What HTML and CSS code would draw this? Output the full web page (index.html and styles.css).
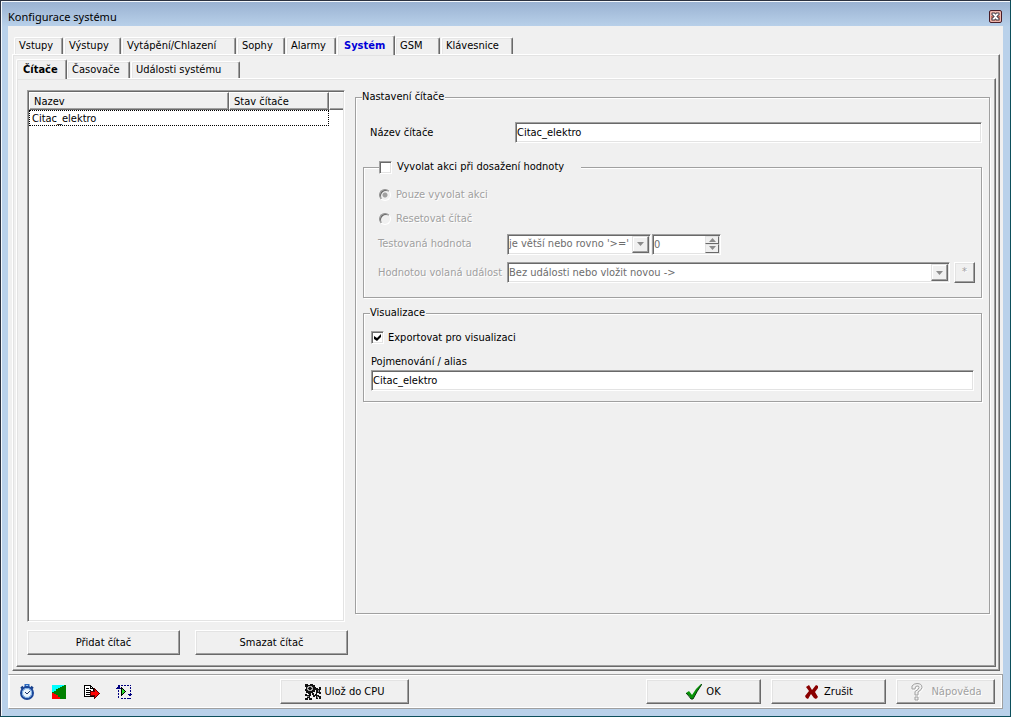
FILE: index.html
```html
<!DOCTYPE html>
<html lang="cs">
<head>
<meta charset="utf-8">
<title>Konfigurace systému</title>
<link rel="stylesheet" href="styles.css">
</head>
<body>
<main class="window">
  <header class="titlebar">
    <h1 class="title">Konfigurace systému</h1>
    <button class="close" type="button" aria-label="Zavřít">
      <svg viewBox="0 0 9 9" width="9" height="9"><path d="M1 1h3v1h1V1h3v2H7v1H6v1h1v1h1v2H5V7H4v1H1V6h1V5h1V4H2V3H1z" fill="#fff" stroke="#4c4650" stroke-width="1"/></svg>
    </button>
  </header>

  <div class="client">
    <div class="tabs tabs-main" role="tablist">
      <button class="tab" role="tab" type="button">Vstupy</button>
      <button class="tab" role="tab" type="button">Výstupy</button>
      <button class="tab" role="tab" type="button">Vytápění/Chlazení</button>
      <button class="tab" role="tab" type="button">Sophy</button>
      <button class="tab" role="tab" type="button">Alarmy</button>
      <button class="tab tab-selected tab-blue" role="tab" type="button" aria-selected="true">Systém</button>
      <button class="tab" role="tab" type="button">GSM</button>
      <button class="tab" role="tab" type="button">Klávesnice</button>
    </div>
    <div class="page page-main">
      <div class="tabs tabs-sub" role="tablist">
        <button class="tab tab-selected" role="tab" type="button" aria-selected="true">Čítače</button>
        <button class="tab" role="tab" type="button">Časovače</button>
        <button class="tab" role="tab" type="button">Události systému</button>
      </div>
      <div class="page page-sub">
        <section class="counters">
          <div class="list">
            <table class="table">
              <thead><tr><th class="col-name">Nazev</th><th class="col-state">Stav čítače</th><th class="col-rest"></th></tr></thead>
              <tbody><tr><td class="focused" colspan="2">Citac_elektro</td><td></td></tr></tbody>
            </table>
          </div>
          <div class="list-actions">
            <button class="btn" type="button">Přidat čítač</button>
            <button class="btn" type="button">Smazat čítač</button>
          </div>
        </section>

        <fieldset class="group settings">
          <legend class="legend">Nastavení čítače</legend>
          <div class="name-row">
            <label for="name">Název čítače</label>
            <input class="field" id="name" type="text" value="Citac_elektro">
          </div>

          <fieldset class="group action">
            <legend class="legend legend-check">
              <label class="choice"><input class="check" type="checkbox">Vyvolat akci při dosažení hodnoty</label>
            </legend>
            <div class="action-body">
              <label class="choice muted"><input class="radio" type="radio" name="mode" checked disabled>Pouze vyvolat akci</label>
              <label class="choice muted"><input class="radio" type="radio" name="mode" disabled>Resetovat čítač</label>
              <div class="action-row">
                <label class="muted" for="cond">Testovaná hodnota</label>
                <span class="combo combo-short">
                  <select class="field" id="cond" disabled><option>je větší nebo rovno '&gt;='</option></select>
                  <span class="drop"><svg viewBox="0 0 7 4" width="7" height="4"><path d="M0 0h7L3.500 4z" fill="#8c8c8c"/></svg></span>
                </span>
                <span class="combo spin">
                  <input class="field" type="number" value="0" aria-label="Hodnota" disabled>
                  <span class="spin-buttons">
                    <button class="spin-btn" type="button" aria-label="Zvýšit" disabled><svg viewBox="0 0 7 4" width="7" height="4"><path d="M0 4h7L3.500 0z" fill="#8c8c8c"/></svg></button>
                    <button class="spin-btn" type="button" aria-label="Snížit" disabled><svg viewBox="0 0 7 4" width="7" height="4"><path d="M0 0h7L3.500 4z" fill="#8c8c8c"/></svg></button>
                  </span>
                </span>
              </div>
              <div class="action-row">
                <label class="muted" for="event">Hodnotou volaná událost</label>
                <span class="combo combo-long">
                  <select class="field" id="event" disabled><option>Bez události nebo vložit novou -&gt;</option></select>
                  <span class="drop"><svg viewBox="0 0 7 4" width="7" height="4"><path d="M0 0h7L3.500 4z" fill="#8c8c8c"/></svg></span>
                </span>
                <button class="btn btn-star" type="button" disabled>*</button>
              </div>
            </div>
          </fieldset>

          <fieldset class="group visual">
            <legend class="legend">Visualizace</legend>
            <div class="visual-body">
              <label class="choice choice-near"><input class="check" type="checkbox" checked>Exportovat pro visualizaci</label>
              <label for="alias">Pojmenování / alias</label>
              <input class="field" id="alias" type="text" value="Citac_elektro">
            </div>
          </fieldset>
        </fieldset>
      </div>
    </div>

    <footer class="footer">
      <div class="tools">
        <button class="tool" type="button" aria-label="Stopky">
          <svg viewBox="0 0 16 16" width="16" height="16"><path d="M4.500 0h5v3h-5z" fill="#2d68bd"/><path d="M6 1h2v1H6z" fill="#9cc8f0"/><path d="M1 4.500L3 2.500M13 4.500L11 2.500" stroke="#173f87" stroke-width="2"/><circle cx="7" cy="9" r="6" fill="#eef6fd" stroke="#1b479a" stroke-width="2"/><circle cx="7" cy="9" r="4.500" fill="none" stroke="#79aee4"/><path d="M5 8l2 2 3-3" fill="none" stroke="#1d3668"/></svg>
        </button>
        <button class="tool" type="button" aria-label="Mapa">
          <svg viewBox="0 0 16 16" width="16" height="16" shape-rendering="crispEdges"><path d="M0 1h14v14H0z" fill="#008000"/><path d="M0 1h12v1h-2v1H8v1H6v1H4v2H2v1H0z" fill="#0ff"/><path d="M0 9h2v1h2v1h2v2h2v2H0z" fill="#f00"/></svg>
        </button>
        <button class="tool" type="button" aria-label="Export">
          <svg viewBox="0 0 16 16" width="16" height="16" shape-rendering="crispEdges"><path d="M.5 1.500h6v3h3v8h-9z" fill="#fff" stroke="#000"/><path d="M6.500 1.500l3 3M2 4h3M2 6h5M2 8h4M2 10h4" fill="none" stroke="#000"/><path d="M6.500 7.500h4v-3l5 5-5 5v-3h-4z" fill="#f00" stroke="#600000"/></svg>
        </button>
        <button class="tool" type="button" aria-label="Spustit výběr">
          <svg viewBox="0 0 16 16" width="16" height="16" shape-rendering="crispEdges"><path d="M5 1.500h10M2.500 6v9M5 14.500h8M14.500 3v7" fill="none" stroke="#000080" stroke-dasharray="2 1"/><path d="M1.500.5h2v2h-2zM0 5h5V4H4V3H1v1H0zM12 10h4v1h-1v1h-2v-1h-1zM13 14h2v1h-2z" fill="#000080"/><path d="M5.500 3.500l4 4-4 4z" fill="#2be02b" stroke="#000"/></svg>
        </button>
      </div>
      <button class="btn btn-save" type="button">
        <svg viewBox="0 0 16 16" width="16" height="16" shape-rendering="crispEdges"><path d="M0 0h3v1h2V0h3v1h2v2h1v3h-1v2H8v1H6v1H3V9H1V7H0V5h1V3H0z" fill="#111"/><path d="M3 2h4v1h1v3H7v1H3V6H2V3h1z" fill="#a8a8a8"/><path d="M4 3h2v1h1v1H6v1H4V5H3V4h1z" fill="#111"/><path d="M11 4h2v1h1V3h2v3h-1v2h1v2h-2V9h-2v2h2v1h2v3h-2v-2h-1v2h-2v-3h-1v-2h1zM0 10h2v1h2v-1h2v2H5v2h2v2H4v-2H3v2H0v-2h2v-2H0zM7 9h2v2h1v2H8v-2H7z" fill="#111"/><path d="M13 6h1v2h-1zM12 12h1v2h-1zM2 12h2v1H2z" fill="#888"/></svg>
        Ulož do CPU
      </button>
      <div class="dialog-actions">
        <button class="btn btn-wide btn-ok" type="button">
          <svg viewBox="0 0 16 16" width="16" height="16"><path d="M0 9l3-2 3 4Q10 4 15 0h1Q11 7 7 15H5Q3 11 0 9z" fill="#079307"/><path d="M0 9q3 3 5 6h2Q11 7 16 0" fill="none" stroke="#06370a"/></svg>
          OK
        </button>
        <button class="btn btn-wide" type="button">
          <svg viewBox="0 0 16 16" width="16" height="16"><path d="M2 3l3-2 3 5 4-5 2 1v2l-3 4 3 5-2 2-2-1-3-4-3 5-2-1-1-2 4-5z" fill="#8a0000"/></svg>
          Zrušit
        </button>
        <button class="btn btn-help" type="button" disabled>
          <svg viewBox="0 0 16 18" width="16" height="18"><path d="M3 6V3q2-2.500 5-2.500Q13 .5 13 4.500q0 2-4 4.500v3H6V8.500q4-2 4-4T8 3Q6 3 6 6zM6 14h3v3H6z" transform="translate(1 1)" fill="none" stroke="#fff"/><path d="M3 6V3q2-2.500 5-2.500Q13 .5 13 4.500q0 2-4 4.500v3H6V8.500q4-2 4-4T8 3Q6 3 6 6zM6 14h3v3H6z" fill="#f0f0f0" stroke="#a0a0a0"/></svg>
          Nápověda
        </button>
      </div>
    </footer>
  </div>
</main>
</body>
</html>
```
FILE: styles.css
```css
* { box-sizing: border-box; }

body {
  margin: 0;
  font: 11px/14px "DejaVu Sans Condensed", Tahoma, sans-serif;
  color: #000;
}

button, input, select { font: inherit; color: inherit; margin: 0; }
button { padding: 0; white-space: nowrap; }
label { white-space: nowrap; }
svg { display: block; flex: none; }

.window {
  display: flex;
  flex-direction: column;
  min-height: 100vh;
  padding: 0 7px 7px;
  border: 1px solid;
  border-color: #2b3140 #0d4f5c #0d4f5c #2b3140;
  background: linear-gradient(#99b1d1, #b9d1ea 26px);
  box-shadow: inset 1px 1px #f4f8fc;
}

.titlebar {
  display: flex;
  align-items: center;
  justify-content: space-between;
  height: 25px;
  padding: 6px 1px 0 0;
}

.title { margin: 0; font: 11px/14px "Noto Sans", sans-serif; }

.close {
  display: grid;
  place-items: center;
  width: 13px;
  height: 13px;
  border: 1px solid #481c26;
  border-radius: 2px;
  background: linear-gradient(#e5a79c 50%, #c26a5c 50%, #d99686);
  box-shadow: inset 0 0 0 1px #eeb7ae;
}

.client {
  flex: 1;
  display: flex;
  flex-direction: column;
  padding-top: 9px;
  background: #f0f0f0;
}

/* Tabs */
.tabs { display: grid; align-items: end; }
.tabs-main {
  grid-template-columns: 50px 58px 115px 49px 51px 58px 46px 73px;
  height: 19px;
  padding-left: 6px;
}
.tabs-sub { grid-template-columns: 51px 64px 110px; height: 19px; }

.tab {
  height: 17px;
  margin-right: 1px;
  padding: 0 0 0 4px;
  border: solid;
  border-width: 1px 1px 0;
  border-color: #fff #696969 #fff #fff;
  border-radius: 2px 2px 0 0;
  background: #f0f0f0;
  box-shadow: inset -1px 0 #a0a0a0, inset 1px 1px #e6e6e6;
  text-align: left;
}
.tab-selected {
  z-index: 1;
  height: 20px;
  margin: 0 0 -1px;
  padding: 1px 0 0 6px;
  font-weight: bold;
}
.tab-blue { color: #0000d8; }

.page {
  flex: 1;
  border: 1px solid;
  border-color: #fff #696969 #696969 #fff;
  box-shadow: inset -1px -1px #a0a0a0, inset 1px 1px #e3e3e3;
}
.page-main {
  display: flex;
  flex-direction: column;
  margin: 0 3px 3px 4px;
  padding: 4px 3px 3px;
}
.page-sub {
  display: grid;
  grid-template-columns: 321px 1fr;
  gap: 7px;
  padding: 11px 5px 11px 10px;
}

/* Sunken and raised surfaces */
.list, .field {
  border: 1px solid;
  border-color: #a0a0a0 #fff #fff #a0a0a0;
  background: #fff;
  box-shadow: inset 1px 1px #696969, inset -1px -1px #e3e3e3;
}

.btn {
  display: flex;
  align-items: center;
  justify-content: center;
  height: 25px;
  padding-top: 1px;
  border: 1px solid;
  border-color: #fff #696969 #696969 #fff;
  background: #f0f0f0;
  box-shadow: inset -1px -1px #a0a0a0, inset 1px 1px #e3e3e3;
}
.btn:disabled, .muted { color: #a0a0a0; text-shadow: 1px 1px #fff; }

/* Counter list */
.counters { display: flex; flex-direction: column; gap: 8px; }
.list { flex: 1; margin-right: 3px; padding: 1px; }
.table { width: 100%; table-layout: fixed; border-collapse: separate; border-spacing: 0; }
.table th {
  height: 18px;
  padding: 2px 0 0 4px;
  border: 1px solid;
  border-color: #fff #696969 #696969 #fff;
  background: #f0f0f0;
  box-shadow: inset -1px -1px #a0a0a0;
  font-weight: normal;
  text-align: left;
}
.table .col-name { width: 200px; }
.table .col-state { width: 100px; }
.table .col-rest { border-right-width: 0; box-shadow: inset 0 -1px #a0a0a0; }
.table td { height: 16px; padding: 2px 0 0; }
.table .focused { outline: 1px dotted #000; outline-offset: -1px; padding-left: 3px; }
.list-actions { display: grid; grid-template-columns: 1fr 1fr; gap: 15px; }

/* Group boxes */
.group {
  min-width: 0;
  margin: 0;
  padding: 0;
  border: 1px solid #a0a0a0;
  box-shadow: 1px 1px #fff, inset 1px 1px #fff;
}
.legend { margin-left: 6px; padding: 0 1px 0 0; background: #f0f0f0; line-height: 14px; }
.settings { margin-bottom: 41px; padding: 0 7px; }
.settings > .legend { margin-left: -1px; }

.name-row {
  display: grid;
  grid-template-columns: 145px 1fr;
  align-items: center;
  padding: 18px 0 0 7px;
}
.field { width: 100%; height: 21px; padding: 0 1px; border-radius: 0; outline: 0; }
.field:disabled { color: #6d6d6d; opacity: 1; }

.choice { display: flex; align-items: center; gap: 5px; }
.choice-near { gap: 4px; }

.check {
  appearance: none;
  position: relative;
  width: 13px;
  height: 13px;
  border: 1px solid;
  border-color: #a0a0a0 #fff #fff #a0a0a0;
  background: #fff;
  box-shadow: inset 1px 1px #696969, inset -1px -1px #e3e3e3;
}
.check:checked::after {
  content: "";
  position: absolute;
  inset: 2px;
  background: #000;
  clip-path: polygon(0 29%, 43% 57%, 100% 0, 100% 43%, 43% 100%, 0 71%);
}

.radio {
  appearance: none;
  width: 12px;
  height: 12px;
  border: 1px solid;
  border-color: #909090 #fff #fff #909090;
  border-radius: 50%;
  background: #f0f0f0;
  box-shadow: inset 1px 1px #696969;
}
.radio:checked { background: radial-gradient(circle, #a0a0a0 2px, #f0f0f0 3px); }

.action { margin-top: 17px; }
.legend-check { width: 202px; margin-left: 15px; }
.action-body { display: grid; padding: 9px 6px 14px 14px; }
.action-body > .choice { height: 24px; padding: 0 0 1px 1px; }
.action-row {
  display: grid;
  grid-template-columns: 129px 144px 70px;
  align-items: center;
  height: 26px;
}
.action-row:last-child { grid-template-columns: 129px 1fr 21px; height: 21px; margin-top: 5px; }
.action-row .spin { margin-left: 1px; }

.combo { position: relative; display: block; }
.combo select { display: block; appearance: none; }
.combo input { display: block; appearance: textfield; }
.combo-long { margin-right: 4px; }
.drop {
  position: absolute;
  top: 2px;
  right: 2px;
  bottom: 2px;
  display: grid;
  place-items: center;
  width: 17px;
  border: 1px solid;
  border-color: #e3e3e3 #696969 #696969 #e3e3e3;
  background: #f0f0f0;
  box-shadow: inset -1px -1px #a0a0a0, inset 1px 1px #fff;
  pointer-events: none;
}
.spin-buttons {
  position: absolute;
  top: 2px;
  right: 2px;
  bottom: 2px;
  display: grid;
  grid-template-rows: 1fr 1fr;
  width: 14px;
}
.spin-btn {
  display: grid;
  place-items: center;
  min-height: 0;
  border: 1px solid;
  border-color: #e3e3e3 #696969 #696969 #e3e3e3;
  background: #f0f0f0;
}
.btn-star { height: 21px; padding: 0 0 2px; }

.visual { margin-top: 8px; }
.visual-body { display: grid; padding: 8px 7px 10px; }
.visual-body > label { height: 20px; padding-top: 5px; }
.visual-body > .choice { height: 19px; padding: 0; margin-bottom: 3px; }

/* Footer */
.footer {
  display: flex;
  align-items: center;
  height: 35px;
  padding: 0 7px 0 11px;
  border: 1px solid;
  border-color: #a0a0a0 #a0a0a0 #a0a0a0 #fff;
  box-shadow: inset 1px 1px #fff, inset -1px -1px #fff;
}
.tools { display: flex; gap: 16px; }
.tool { border: 0; background: none; }
.btn-save { gap: 4px; width: 129px; margin-left: 148px; }
.dialog-actions { display: flex; gap: 10px; margin-left: auto; }
.btn-wide { gap: 4px; width: 115px; }
.btn-help { gap: 6px; width: 99px; }
```
